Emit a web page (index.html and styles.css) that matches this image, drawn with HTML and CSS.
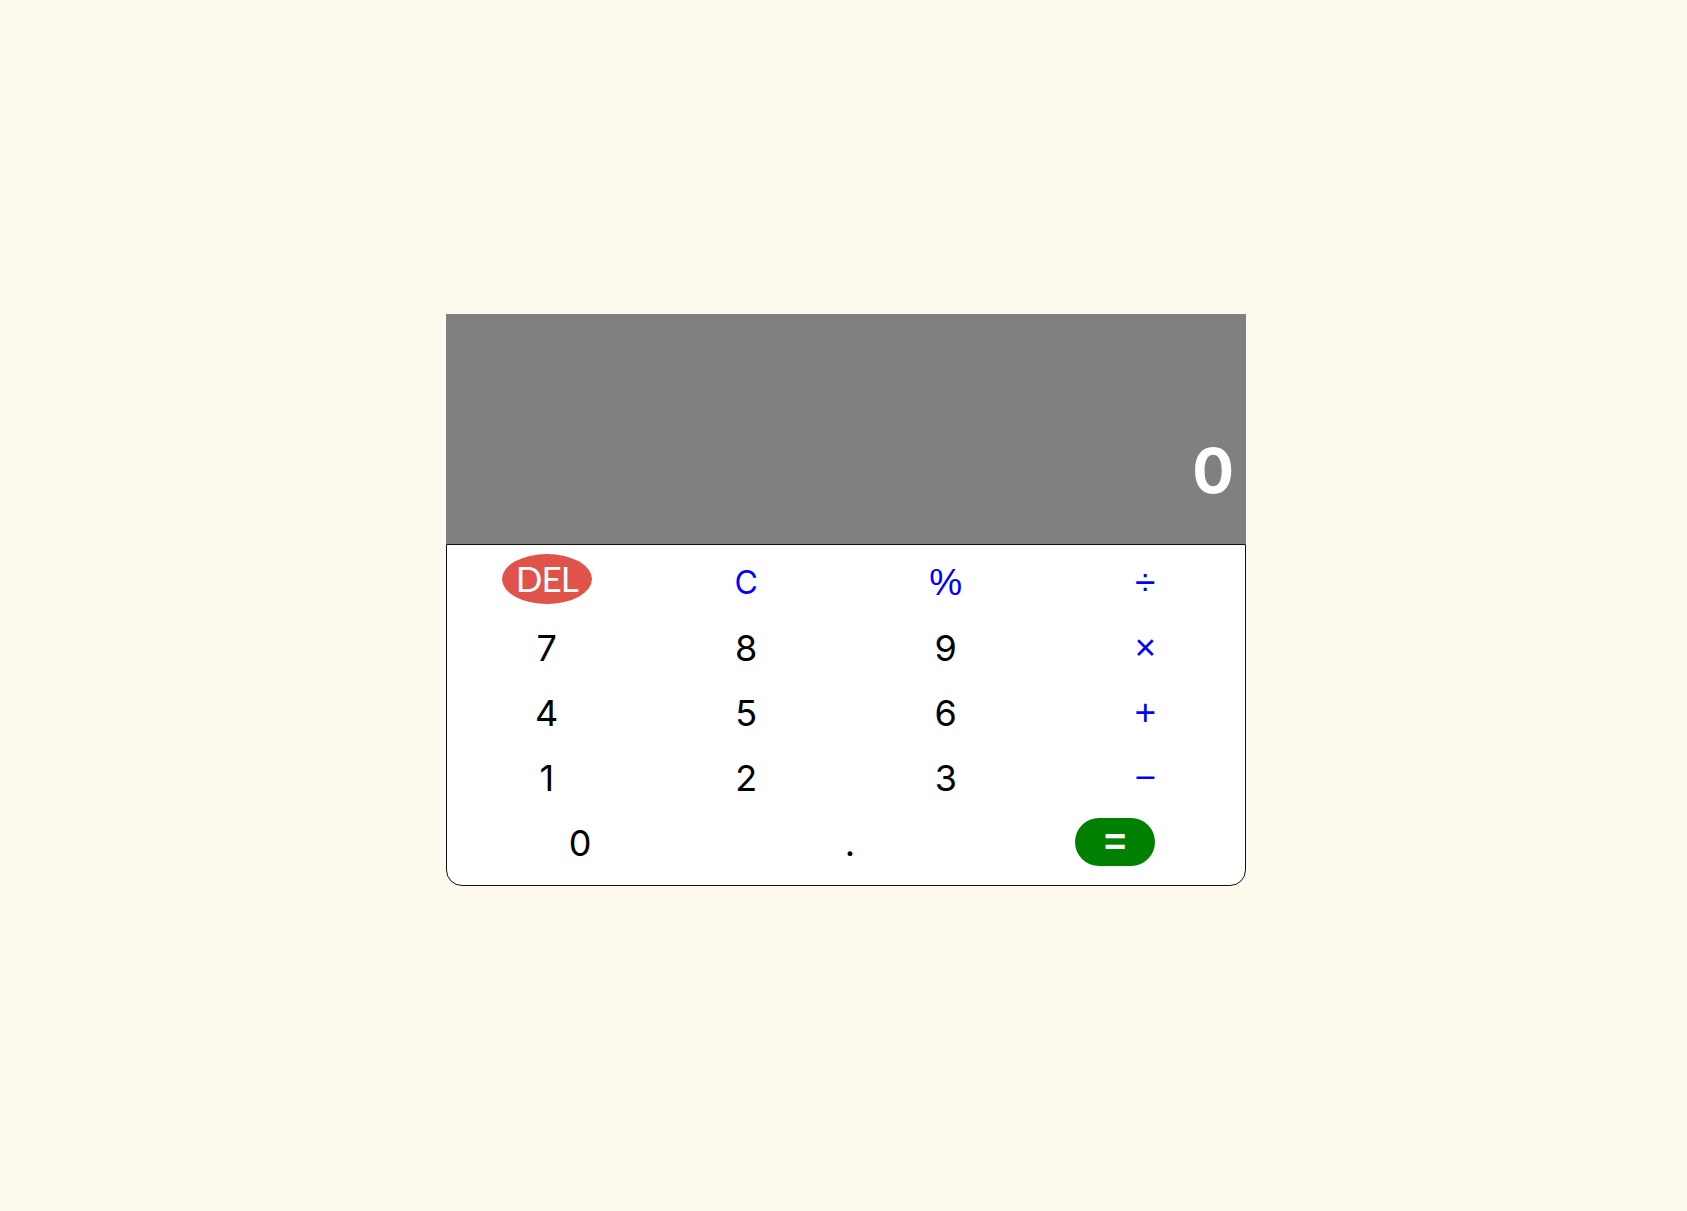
FILE: index.html
```html
<!DOCTYPE html>
<html lang="en">
<head>
<meta charset="utf-8">
<title>Calculator</title>
<link rel="stylesheet" href="styles.css">
</head>
<body>
<main class="calculator">
  <div class="display"><span class="display-value">0</span></div>
  <div class="keypad">
    <button class="key key-del"><span class="del-pill">DEL</span></button>
    <button class="key key-fn">C</button>
    <button class="key key-op key-sym">%</button>
    <button class="key key-op key-sym">÷</button>
    <button class="key">7</button>
    <button class="key">8</button>
    <button class="key">9</button>
    <button class="key key-op key-sym">×</button>
    <button class="key">4</button>
    <button class="key">5</button>
    <button class="key">6</button>
    <button class="key key-op key-sym">+</button>
    <button class="key">1</button>
    <button class="key">2</button>
    <button class="key">3</button>
    <button class="key key-op key-sym">−</button>
    <button class="key key-wide">0</button>
    <button class="key key-wide key-dot">.</button>
    <button class="key key-wide key-eq-cell"><span class="eq-pill">=</span></button>
  </div>
</main>
</body>
</html>
```
FILE: styles.css
```css
html, body {
  margin: 0;
  padding: 0;
}

body {
  background: #fffaed;
  min-height: 100vh;
  display: flex;
  justify-content: center;
  align-items: center;
  padding-left: 5px;
  padding-bottom: 11px;
  box-sizing: border-box;
  font-family: "Inter", "Noto Sans", sans-serif;
}

.calculator {
  width: 800px;
}

.display {
  height: 230px;
  background: #808080;
  display: flex;
  justify-content: flex-end;
  align-items: flex-end;
  padding: 0 12px 42px 0;
  box-sizing: border-box;
}

.display-value {
  color: #ffffff;
  font-family: "Inter", "Noto Sans", sans-serif;
  font-weight: 700;
  font-size: 62px;
  line-height: 1;
}

.keypad {
  background: #ffffff;
  border: 1px solid #111111;
  border-radius: 0 0 16px 16px;
  display: grid;
  grid-template-columns: repeat(12, 1fr);
  grid-auto-rows: 65px;
  padding: 5px 0 10px;
}

.key {
  grid-column: span 3;
  background: none;
  border: 0;
  padding: 0;
  margin: 0;
  display: flex;
  align-items: center;
  justify-content: center;
  font-family: "Inter", "Noto Sans", sans-serif;
  font-size: 36px;
  font-weight: 400;
  color: #000000;
  line-height: 1;
  cursor: pointer;
}

.key-wide {
  grid-column: span 4;
}

.key-dot {
  padding-left: 8px;
}

.key-eq-cell {
  padding-left: 6px;
}

.key-fn {
  color: #0000ff;
  font-size: 32px;
}

.key-op {
  color: #0000ff;
}

.key-sym {
  font-family: "Liberation Sans", Arial, sans-serif;
  font-size: 37px;
}

.del-pill {
  width: 90px;
  height: 50px;
  border-radius: 50%;
  background: #e0534a;
  color: #ffffff;
  display: flex;
  align-items: center;
  justify-content: center;
  font-family: "Lato", "Inter", sans-serif;
  font-size: 35px;
  letter-spacing: -1px;
  margin-top: -8px;
}

.eq-pill {
  width: 80px;
  height: 48px;
  border-radius: 24px;
  background: #008000;
  color: #ffffff;
  display: flex;
  align-items: center;
  justify-content: center;
  font-family: "Liberation Sans", Arial, sans-serif;
  font-weight: 700;
  font-size: 38px;
  margin-top: -2px;
}
```
